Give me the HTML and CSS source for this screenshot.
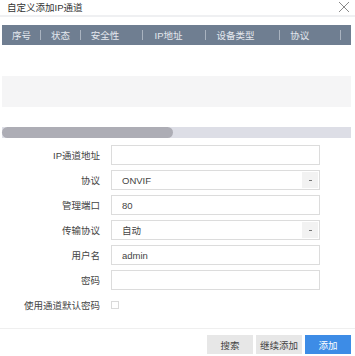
FILE: index.html
```html
<!DOCTYPE html>
<html lang="zh-CN">
<head>
<meta charset="utf-8">
<title>自定义添加IP通道</title>
<link rel="stylesheet" href="styles.css">
</head>
<body>
<div class="dialog">
  <div class="titlebar">
    <span class="title">自定义添加IP通道</span>
    <svg class="close" width="12" height="12" viewBox="0 0 12 12"><path d="M1 1L11 11M11 1L1 11" stroke="#8a8a8a" stroke-width="1" fill="none"/></svg>
  </div>
  <div class="table">
    <div class="thead">
      <div class="th c1">序号</div>
      <div class="th c2">状态</div>
      <div class="th c3">安全性</div>
      <div class="th c4">IP地址</div>
      <div class="th c5">设备类型</div>
      <div class="th c6">协议</div>
      <div class="th c7"></div>
    </div>
    <div class="row"></div>
    <div class="row alt"></div>
  </div>
  <div class="scrollbar"><div class="thumb"></div></div>
  <div class="form">
    <label class="lbl">IP通道地址</label>
    <div class="input"></div>
    <label class="lbl">协议</label>
    <div class="input select"><span>ONVIF</span><span class="arrow"><i></i></span></div>
    <label class="lbl">管理端口</label>
    <div class="input"><span>80</span></div>
    <label class="lbl">传输协议</label>
    <div class="input select"><span>自动</span><span class="arrow"><i></i></span></div>
    <label class="lbl">用户名</label>
    <div class="input"><span>admin</span></div>
    <label class="lbl">密码</label>
    <div class="input"></div>
    <label class="lbl">使用通道默认密码</label>
    <div class="checkwrap"><span class="checkbox"></span></div>
  </div>
  <div class="footer">
    <button class="btn">搜索</button>
    <button class="btn">继续添加</button>
    <button class="btn primary">添加</button>
  </div>
</div>
</body>
</html>
```
FILE: styles.css
```css
* { box-sizing: border-box; }
html, body { margin: 0; padding: 0; background: #fff; }
body {
  width: 355px;
  height: 356px;
  overflow: hidden;
  font-family: "Liberation Sans", "Noto Sans CJK SC", sans-serif;
  font-size: 9.5px;
  color: #444;
}
.dialog { display: flex; flex-direction: column; }
.titlebar {
  height: 17px;
  border-bottom: 2px solid #eff0f2;
  display: flex;
  align-items: center;
  justify-content: space-between;
  padding: 0 5px 1px 7px;
  color: #333;
}
.close { display: block; }
.table { margin: 8px 4px 0 2px; }
.thead {
  height: 20px;
  background: #6f7e91;
  display: flex;
  align-items: center;
  color: #e4e8ee;
}
.th {
  position: relative;
  height: 100%;
  display: flex;
  align-items: center;
  padding-left: 10px;
}
.th::after {
  content: "";
  position: absolute;
  right: 0;
  top: 5px;
  height: 10px;
  width: 1px;
  background: #a9b3c0;
}
.c1 { width: 39px; }
.c2 { width: 40px; }
.c3 { width: 62px; }
.c4 { width: 64px; padding-left: 12px; }
.c5 { width: 74px; }
.c6 { width: 61px; }
.c7 { flex: 1; }
.c7::after { display: none; }
.row { height: 31px; background: #fff; }
.row.alt { background: #f5f5f6; }
.scrollbar {
  margin: 20px 4px 0 2px;
  height: 11px;
  background: #dddee6;
}
.thumb {
  width: 171px;
  height: 100%;
  background: #adadb5;
  border-radius: 6px;
}
.form {
  margin-top: 7px;
  display: grid;
  grid-template-columns: 100px 209px;
  column-gap: 11px;
  row-gap: 5px;
  grid-auto-rows: 20px;
}
.lbl {
  display: flex;
  align-items: center;
  justify-content: flex-end;
  color: #444;
}
.input {
  border: 1px solid #dcdcdc;
  background: #fff;
  display: flex;
  align-items: center;
  padding-left: 10px;
  color: #444;
}
.input.select { justify-content: space-between; padding-right: 1px; }
.arrow {
  width: 16px;
  height: 16px;
  background: #f2f2f2;
  display: flex;
  align-items: center;
  justify-content: center;
}
.arrow i {
  display: block;
  width: 3px;
  height: 1px;
  background: #777;
}
.checkwrap { display: flex; align-items: center; }
.checkbox {
  width: 8px;
  height: 8px;
  border: 1px solid #dadada;
  background: #fff;
}
.footer {
  margin-top: 13px;
  border-top: 1px solid #efefef;
  padding: 6px 4px 0 0;
  display: flex;
  justify-content: flex-end;
  gap: 3px;
}
.btn {
  width: 46px;
  height: 19px;
  border: none;
  background: #e7e7e7;
  color: #444;
  font-family: inherit;
  font-size: 9.5px;
  padding: 0;
}
.btn.primary { background: #3d8ce6; color: #fff; }
```
